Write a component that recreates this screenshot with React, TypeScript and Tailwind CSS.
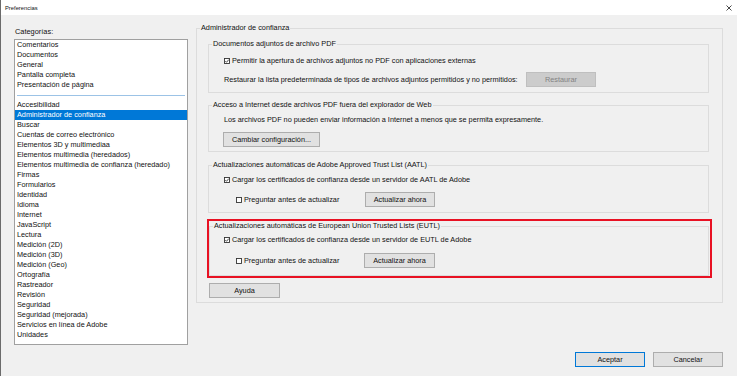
import type { ReactNode } from 'react';

const font = { fontFamily: '"Liberation Sans", Arial, sans-serif' };

const categoriesTop = ['Comentarios', 'Documentos', 'General', 'Pantalla completa', 'Presentación de página'];
const categories = [
  'Accesibilidad',
  'Administrador de confianza',
  'Buscar',
  'Cuentas de correo electrónico',
  'Elementos 3D y multimediaa',
  'Elementos multimedia (heredados)',
  'Elementos multimedia de confianza (heredado)',
  'Firmas',
  'Formularios',
  'Identidad',
  'Idioma',
  'Internet',
  'JavaScript',
  'Lectura',
  'Medición (2D)',
  'Medición (3D)',
  'Medición (Geo)',
  'Ortografía',
  'Rastreador',
  'Revisión',
  'Seguridad',
  'Seguridad (mejorada)',
  'Servicios en línea de Adobe',
  'Unidades',
];

function Check({ checked }: { checked?: boolean }) {
  return (
    <svg width="6" height="6" viewBox="0 0 6 6" className="shrink-0">
      <rect x="0.5" y="0.5" width="5" height="5" fill="#fff" stroke="#333" strokeWidth="0.9" />
      {checked && <path d="M1.3 3.1 L2.5 4.3 L4.8 1.6" fill="none" stroke="#222" strokeWidth="0.8" />}
    </svg>
  );
}

function Btn({ children, w, disabled, primary }: { children: ReactNode; w: string; disabled?: boolean; primary?: boolean }) {
  const base = 'flex h-[15px] shrink-0 items-center justify-center border leading-none';
  const look = disabled
    ? 'border-[#bfbfbf] bg-[#cccccc] text-[#838383]'
    : primary
      ? 'border-[#0078d7] bg-[#e1e1e1] text-[#111]'
      : 'border-[#adadad] bg-[#e1e1e1] text-[#111]';
  return <div className={`${base} ${look} ${w}`}>{children}</div>;
}

function Group({ title, children, className = '' }: { title: string; children: ReactNode; className?: string }) {
  return (
    <fieldset className={`border border-[#dcdcdc] ${className}`}>
      <legend className="ml-[3px] px-[1px] leading-[10px]">{title}</legend>
      {children}
    </fieldset>
  );
}

export default function App() {
  return (
    <div
      style={font}
      className="flex h-[376px] w-[737px] flex-col overflow-hidden border-l border-[#6b6b6b] bg-[#f0f0f0] text-[7.3px] leading-[10px] text-[#111]"
    >
      <div className="flex h-[15px] items-center justify-between bg-white pl-[4px] pr-[5px]">
        <span className="text-[5.8px]">Preferencias</span>
        <svg width="6" height="6" viewBox="0 0 6 6">
          <path d="M0.5 0.5 L5.5 5.5 M5.5 0.5 L0.5 5.5" stroke="#333" strokeWidth="0.9" />
        </svg>
      </div>

      <div className="flex h-[330px]">
        <div className="flex w-[187px] flex-col pl-[13px] pt-[12px]">
          <div className="mb-[2px] h-[10px] pl-[1px] text-[7.4px]">Categorías:</div>
          <div className="flex h-[306px] w-[174px] flex-col border border-[#a0a0a0] bg-white">
            {categoriesTop.map((c) => (
              <div key={c} className="h-[10px] pl-[2px] whitespace-nowrap">
                {c}
              </div>
            ))}
            <div className="flex h-[10px] items-center px-[2px]">
              <div className="h-px w-full bg-[#9cc3e6]" />
            </div>
            {categories.map((c) => (
              <div
                key={c}
                className={`h-[10px] pl-[2px] whitespace-nowrap ${c === 'Administrador de confianza' ? 'bg-[#0078d7] text-white' : ''}`}
              >
                {c}
              </div>
            ))}
          </div>
        </div>

        <div className="ml-[8px] mt-[8px]">
          <Group title="Administrador de confianza" className="w-[527px]">
            <div className="flex flex-col pb-[4px] pl-[11px] pr-[13px] pt-[6px]">
              <Group title="Documentos adjuntos de archivo PDF">
                <div className="flex flex-col pb-[5px] pl-[15px] pt-[7px]">
                  <div className="flex h-[10px] items-center gap-[2px]">
                    <Check checked />
                    <span>Permitir la apertura de archivos adjuntos no PDF con aplicaciones externas</span>
                  </div>
                  <div className="mt-[6px] flex items-center">
                    <span className="w-[302px] whitespace-nowrap">
                      Restaurar la lista predeterminada de tipos de archivos adjuntos permitidos y no permitidos:
                    </span>
                    <Btn w="w-[70px]" disabled>
                      Restaurar
                    </Btn>
                  </div>
                </div>
              </Group>

              <Group title="Acceso a Internet desde archivos PDF fuera del explorador de Web" className="mt-[7px]">
                <div className="flex flex-col pb-[4px] pl-[15px] pt-[5px]">
                  <div className="h-[10px]">
                    Los archivos PDF no pueden enviar información a Internet a menos que se permita expresamente.
                  </div>
                  <div className="mt-[7px] -ml-px">
                    <Btn w="w-[97px]">Cambiar configuración...</Btn>
                  </div>
                </div>
              </Group>

              <Group title="Actualizaciones automáticas de Adobe Approved Trust List (AATL)" className="mt-[8px]">
                <div className="flex flex-col pb-[5px] pl-[15px] pt-[5px]">
                  <div className="flex h-[10px] items-center gap-[2px]">
                    <Check checked />
                    <span>Cargar los certificados de confianza desde un servidor de AATL de Adobe</span>
                  </div>
                  <div className="mt-[7px] flex items-center">
                    <div className="flex w-[141px] items-center gap-[2px] pl-[12px]">
                      <Check />
                      <span>Preguntar antes de actualizar</span>
                    </div>
                    <Btn w="w-[70px]">Actualizar ahora</Btn>
                  </div>
                </div>
              </Group>

              <div className="-ml-px -mr-[3px] mt-[6px] border-2 border-[#e81123]">
                <Group title="Actualizaciones automáticas de European Union Trusted Lists (EUTL)" className="mr-px">
                  <div className="flex flex-col pb-[7px] pl-[14px] pt-[4px]">
                    <div className="flex h-[10px] items-center gap-[2px]">
                      <Check checked />
                      <span>Cargar los certificados de confianza desde un servidor de EUTL de Adobe</span>
                    </div>
                    <div className="mt-[8px] flex items-center">
                      <div className="flex w-[140px] items-center gap-[2px] pl-[12px]">
                        <Check />
                        <span>Preguntar antes de actualizar</span>
                      </div>
                      <Btn w="w-[71px]">Actualizar ahora</Btn>
                    </div>
                  </div>
                </Group>
              </div>

              <div className="mt-[5px] pl-px">
                <Btn w="w-[71px]">Ayuda</Btn>
              </div>
            </div>
          </Group>
        </div>
      </div>

      <div className="flex justify-end gap-[8px] pr-[14px] pt-[7px]">
        <Btn w="w-[70px]" primary>
          Aceptar
        </Btn>
        <Btn w="w-[70px]">Cancelar</Btn>
      </div>
    </div>
  );
}
